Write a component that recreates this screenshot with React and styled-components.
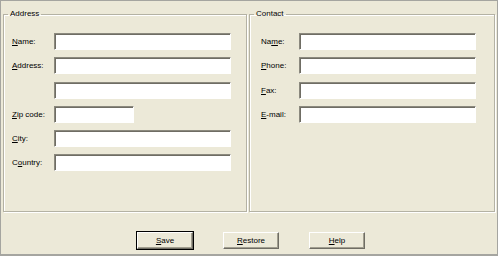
import React from "react";
import styled, { createGlobalStyle } from "styled-components";

const GlobalStyle = createGlobalStyle`
  html, body {
    margin: 0;
    padding: 0;
    background: #ece9d8;
  }
  * {
    box-sizing: border-box;
  }
`;

const Window = styled.div`
  width: 498px;
  height: 256px;
  border: 1px solid #a5a5a0;
  border-bottom-width: 2px;
  background: #ece9d8;
  font-family: "Liberation Sans", Arial, sans-serif;
  font-size: 8px;
  color: #000;
  display: flex;
  flex-direction: column;
`;

const Groups = styled.div`
  display: flex;
  gap: 2px;
  padding: 8px 0 0 2px;
`;

const Group = styled.fieldset`
  margin: 0;
  min-width: 0;
  width: ${({ $width }) => $width}px;
  height: 203px;
  border: 1px solid #b4b2a4;
  box-shadow: inset 1px 1px 0 #fff, 1px 1px 0 #fff;
  padding: 14px 0 0 0;
`;

const Legend = styled.legend`
  padding: 0 2px;
  margin-left: 4px;
  line-height: 10px;
  font-size: 8px;
`;

const Form = styled.div`
  display: grid;
  grid-template-columns: ${({ $label }) => $label}px 177px;
  grid-auto-rows: 17px;
  row-gap: 7.3px;
  align-items: center;
  padding-left: ${({ $pad }) => $pad}px;
`;

const Label = styled.label`
  white-space: nowrap;
  & u {
    text-decoration: underline;
  }
`;

const Input = styled.input`
  width: ${({ $w }) => $w || 177}px;
  height: 17px;
  margin: 0;
  padding: 0 2px;
  background: #fff;
  border: 1px solid;
  border-color: #8b897e #fff #fff #8b897e;
  box-shadow: inset 1px 1px 0 #6f6d64;
  font: inherit;
  outline: none;
`;

const Buttons = styled.div`
  display: flex;
  justify-content: center;
  gap: 30px;
  padding: 20px 0 0 4px;
`;

const Button = styled.button`
  width: 56px;
  height: 17px;
  margin: 0;
  padding: 0;
  font: inherit;
  color: #000;
  background: #ece9d8;
  border: 1px solid;
  border-color: #fff #6f6d64 #6f6d64 #fff;
  box-shadow: ${({ $default }) =>
    $default ? "0 0 0 1px #000, inset -1px -1px 0 #a19e8f" : "inset -1px -1px 0 #a19e8f"};
`;

const Spacer = styled.div``;

const App = () => (
  <Window>
    <GlobalStyle />
    <Groups>
      <Group $width={244}>
        <Legend>Address</Legend>
        <Form $label={42} $pad={8}>
          <Label><u>N</u>ame:</Label>
          <Input />
          <Label><u>A</u>ddress:</Label>
          <Input />
          <Spacer />
          <Input />
          <Label><u>Z</u>ip code:</Label>
          <Input $w={80} />
          <Label><u>C</u>ity:</Label>
          <Input />
          <Label>C<u>o</u>untry:</Label>
          <Input />
        </Form>
      </Group>
      <Group $width={246}>
        <Legend>Contact</Legend>
        <Form $label={38} $pad={11}>
          <Label>Na<u>m</u>e:</Label>
          <Input />
          <Label><u>P</u>hone:</Label>
          <Input />
          <Label><u>F</u>ax:</Label>
          <Input />
          <Label><u>E</u>-mail:</Label>
          <Input />
        </Form>
      </Group>
    </Groups>
    <Buttons>
      <Button $default><u>S</u>ave</Button>
      <Button><u>R</u>estore</Button>
      <Button><u>H</u>elp</Button>
    </Buttons>
  </Window>
);

export default App;
